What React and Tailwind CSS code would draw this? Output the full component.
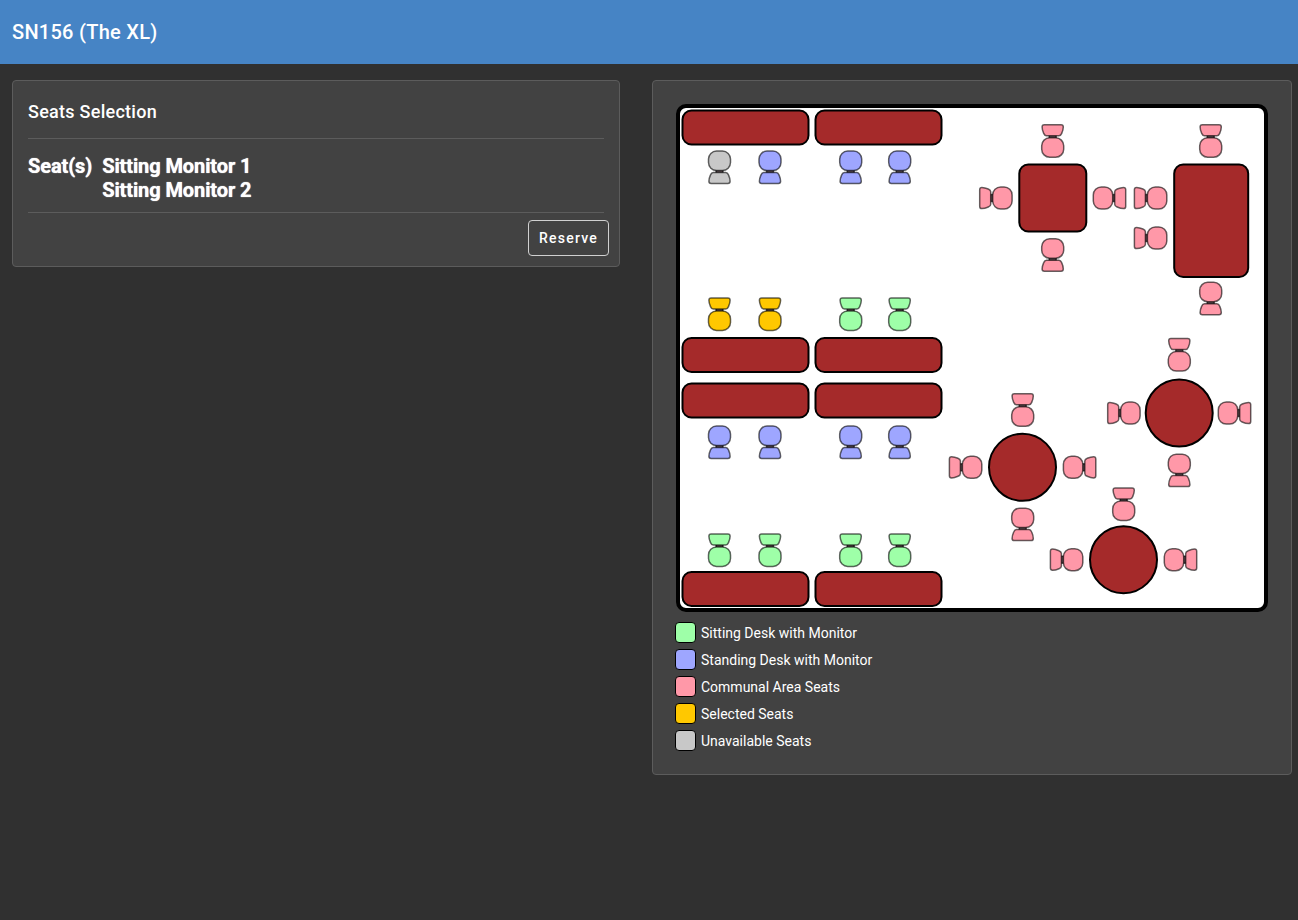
import React from "react";

const GREEN = "#9effa8";
const BLUE = "#9ea6ff";
const PINK = "#ff98a8";
const YELLOW = "#ffc800";
const GRAY = "#c8c8c8";

const legend = [
  { color: "bg-[#9effa8]", label: "Sitting Desk with Monitor" },
  { color: "bg-[#9ea6ff]", label: "Standing Desk with Monitor" },
  { color: "bg-[#ff98a8]", label: "Communal Area Seats" },
  { color: "bg-[#ffc800]", label: "Selected Seats" },
  { color: "bg-[#c8c8c8]", label: "Unavailable Seats" },
];

const desks = [
  [682, 110], [815, 110],
  [682, 337.5], [815, 337.5],
  [682, 383], [815, 383],
  [682, 571.5], [815, 571.5],
];

// x, y = centre of the chair, rot 0 = back on top
const chairs = [
  [719.5, 167.5, 180, GRAY], [770, 167.5, 180, BLUE], [850.7, 167.5, 180, BLUE], [899.7, 167.5, 180, BLUE],
  [719.5, 314, 0, YELLOW], [770, 314, 0, YELLOW], [850.7, 314, 0, GREEN], [899.7, 314, 0, GREEN],
  [719.5, 442.5, 180, BLUE], [770, 442.5, 180, BLUE], [850.7, 442.5, 180, BLUE], [899.7, 442.5, 180, BLUE],
  [719.5, 550, 0, GREEN], [770, 550, 0, GREEN], [850.7, 550, 0, GREEN], [899.7, 550, 0, GREEN],
  // square table
  [1052.7, 140.8, 0, PINK], [1052.7, 255.2, 180, PINK], [995.7, 198, -90, PINK], [1109.7, 198, 90, PINK],
  // long table
  [1210.7, 140.8, 0, PINK], [1210.7, 298.7, 180, PINK], [1150.4, 198, -90, PINK], [1150.4, 238, -90, PINK],
  // round tables
  [1022.7, 409.8, 0, PINK], [1022.7, 524.6, 180, PINK], [965.4, 467.3, -90, PINK], [1079.8, 467.3, 90, PINK],
  [1179.3, 354.6, 0, PINK], [1179.3, 470.6, 180, PINK], [1123.7, 413, -90, PINK], [1234.7, 413, 90, PINK],
  [1123.7, 504, 0, PINK], [1066.4, 559.7, -90, PINK], [1180.7, 559.7, 90, PINK],
];

const roundTables = [
  [1022.5, 467.3],
  [1179.2, 413],
  [1123.5, 559.7],
];

function Chair({ x, y, rot, color }) {
  return (
    <g transform={`translate(${x} ${y}) rotate(${rot})`} fill={color} stroke="#000" strokeOpacity="0.6" strokeWidth="1.5">
      <rect x="-3.5" y="-6" width="7" height="4" fill="#5a4a4e" />
      <path d="M-8.4 -16 H8.4 Q10.6 -16 10.6 -13.8 Q10.6 -11 9 -7.4 Q8 -5 6.2 -5 H-6.2 Q-8 -5 -9 -7.4 Q-10.6 -11 -10.6 -13.8 Q-10.6 -16 -8.4 -16 Z" />
      <rect x="-11" y="-3" width="22" height="19.4" rx="8" />
    </g>
  );
}

function FloorPlan() {
  return (
    <div className="w-[592px] h-[508px] border-4 border-black rounded-[10px] bg-white overflow-hidden">
      <svg width="584" height="500" viewBox="680 108 584 500" className="block">
        {desks.map(([x, y], i) => (
          <rect key={i} x={x + 0.5} y={y + 0.5} width="126" height="34" rx="9" fill="#a52a2a" stroke="#000" strokeWidth="2" />
        ))}
        <rect x="1019.3" y="164.5" width="67" height="67" rx="9" fill="#a52a2a" stroke="#000" strokeWidth="2" />
        <rect x="1174.2" y="164.5" width="74" height="112.5" rx="9" fill="#a52a2a" stroke="#000" strokeWidth="2" />
        {roundTables.map(([x, y], i) => (
          <circle key={i} cx={x} cy={y} r="33.5" fill="#a52a2a" stroke="#000" strokeWidth="2" />
        ))}
        {chairs.map(([x, y, rot, color], i) => (
          <Chair key={i} x={x} y={y} rot={rot} color={color} />
        ))}
      </svg>
    </div>
  );
}

export default function App() {
  return (
    <div className="min-h-[920px] bg-[#303030] text-white font-['Roboto',sans-serif]">
      <header className="h-16 bg-[#4684c5] flex items-center px-3">
        <h1 className="text-xl font-medium tracking-[0.27px]">SN156 (The XL)</h1>
      </header>
      <main className="flex items-start gap-8 pt-4 pl-3 pr-1.5">
        <section className="w-[608px] h-[187px] rounded border border-[#5c5c5c] bg-[#424242] flex flex-col">
          <h2 className="h-[58px] mx-[15px] flex items-center pt-[4px] text-lg font-medium tracking-[0.27px] border-b border-[#5c5c5c]">
            Seats Selection
          </h2>
          <div className="h-[74px] mx-[15px] pt-[15px] flex gap-2.5 text-xl leading-6 font-bold tracking-[-0.1px] [text-shadow:0_0_1px_#ffffff] border-b border-[#5c5c5c]">
            <div>Seat(s)</div>
            <div>
              <div>Sitting Monitor 1</div>
              <div>Sitting Monitor 2</div>
            </div>
          </div>
          <div className="flex justify-end pt-[7px] pr-2.5">
            <button className="w-[81px] h-9 rounded border border-[#d0d0d0] text-sm font-medium tracking-[1.25px]">
              Reserve
            </button>
          </div>
        </section>
        <section className="w-[640px] h-[695px] rounded border border-[#5c5c5c] bg-[#424242] pt-[23px] pl-[23px]">
          <FloorPlan />
          <ul className="mt-[10px] -ml-px flex flex-col gap-1.5">
            {legend.map((item) => (
              <li key={item.label} className="flex items-center gap-[5px] h-[21px] text-sm">
                <span className={`w-[21px] h-[21px] rounded border border-black ${item.color}`} />
                <span>{item.label}</span>
              </li>
            ))}
          </ul>
        </section>
      </main>
    </div>
  );
}
